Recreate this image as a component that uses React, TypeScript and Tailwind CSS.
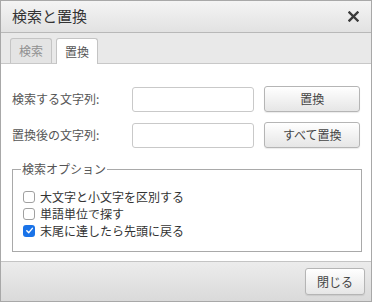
import { useState } from "react";

const font = { fontFamily: '"Noto Sans CJK JP", "Noto Sans", sans-serif' };

const Btn = (props: { label: string; className?: string }) => (
  <button
    className={`flex items-center justify-center rounded-[3px] border border-[#b5b5b5] bg-gradient-to-b from-white to-[#e6e6e6] text-[12px] text-[#444] shadow-[0_1px_1px_rgba(0,0,0,0.08)] ${props.className ?? ""}`}
  >
    {props.label}
  </button>
);

const Check = (props: { label: string; checked: boolean; onToggle: () => void }) => (
  <label className="flex h-[17px] items-center gap-[5px] text-[12px] leading-[17px] text-[#333]" onClick={props.onToggle}>
    {props.checked ? (
      <span className="flex h-[12px] w-[12px] shrink-0 items-center justify-center rounded-[3px] bg-[#1a73e8]">
        <svg width="9" height="9" viewBox="0 0 10 10">
          <path d="M2 5.2 L4.2 7.4 L8.2 2.6" fill="none" stroke="white" strokeWidth="1.6" strokeLinecap="round" strokeLinejoin="round" />
        </svg>
      </span>
    ) : (
      <span className="h-[12px] w-[12px] shrink-0 rounded-[3px] border border-[#a0a0a0] bg-white" />
    )}
    <span>{props.label}</span>
  </label>
);

export default function App() {
  const [opts, setOpts] = useState([false, false, true]);
  const labels = ["大文字と小文字を区別する", "単語単位で探す", "末尾に達したら先頭に戻る"];

  return (
    <div style={font} className="flex h-[302px] w-[372px] flex-col border border-[#a8a8a8] bg-white">
      {/* title */}
      <div className="flex h-[32px] items-center justify-between border-b border-[#b8b8b8] bg-gradient-to-b from-[#f4f4f4] to-[#e2e2e2] pl-[11px] pr-[12px]">
        <span className="text-[15px] text-[#333]">検索と置換</span>
        <svg width="11" height="11" viewBox="0 0 11 11">
          <path d="M1.5 1.5 L9.5 9.5 M9.5 1.5 L1.5 9.5" stroke="#3a3a3a" strokeWidth="2.4" strokeLinecap="square" />
        </svg>
      </div>

      {/* tabs */}
      <div className="flex h-[31px] items-end gap-[4px] border-b border-[#c8c8c8] bg-[#e9e9e9] pl-[9px]">
        <div className="flex h-[25px] w-[42px] items-center justify-center rounded-t-[3px] border border-b-0 border-[#c4c4c4] bg-[#e4e4e4] text-[12px] text-[#909090]">
          検索
        </div>
        <div className="-mb-px flex h-[26px] w-[42px] items-center justify-center rounded-t-[3px] border border-b-0 border-[#c4c4c4] bg-white text-[12px] text-[#555]">
          置換
        </div>
      </div>

      {/* body */}
      <div className="flex flex-1 flex-col px-[11px] pt-[22px]">
        <div className="flex h-[26px] items-center">
          <span className="w-[121px] text-[12px] text-[#555]">検索する文字列:</span>
          <input className="h-[25px] w-[122px] rounded-[3px] border border-[#c9c9c9] bg-white" />
          <Btn label="置換" className="ml-[10px] h-[26px] w-[96px]" />
        </div>
        <div className="mt-[10px] flex h-[26px] items-center">
          <span className="w-[121px] text-[12px] text-[#555]">置換後の文字列:</span>
          <input className="h-[25px] w-[122px] rounded-[3px] border border-[#c9c9c9] bg-white" />
          <Btn label="すべて置換" className="ml-[10px] h-[26px] w-[96px]" />
        </div>

        <fieldset className="mt-[12px] h-[92px] w-[350px] border border-[#a9a9a9] pl-[10px] pt-[10px]">
          <legend className="ml-[-2px] px-[1px] text-[12px] text-[#555]">検索オプション</legend>
          <div className="flex flex-col">
            {labels.map((l, i) => (
              <Check
                key={l}
                label={l}
                checked={opts[i]}
                onToggle={() => setOpts(opts.map((o, j) => (j === i ? !o : o)))}
              />
            ))}
          </div>
        </fieldset>
      </div>

      {/* footer */}
      <div className="flex h-[40px] items-center justify-end border-t border-[#c4c4c4] bg-gradient-to-b from-[#ececec] to-[#dadada] pr-[6px]">
        <Btn label="閉じる" className="h-[27px] w-[60px]" />
      </div>
    </div>
  );
}
